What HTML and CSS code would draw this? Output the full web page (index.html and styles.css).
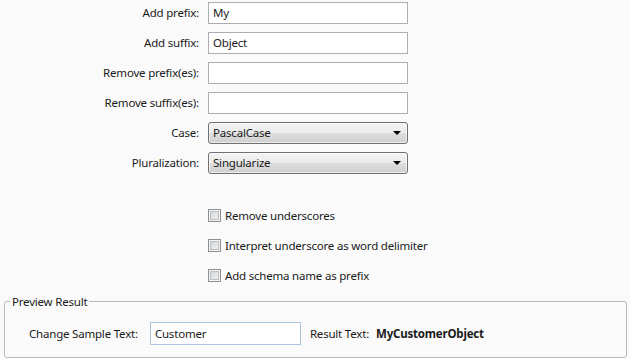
FILE: index.html
```html
<!DOCTYPE html>
<html lang="en">
  <head>
    <meta charset="UTF-8" />
    <title>Naming Options</title>
    <link rel="stylesheet" href="styles.css">
  </head>
  <body>
    <!-- Naming rules -->
    <div class="form-grid">
      <label class="field-label">Add prefix:</label>
      <div class="text-box">My</div>
      <label class="field-label">Add suffix:</label>
      <div class="text-box">Object</div>
      <label class="field-label">Remove prefix(es):</label>
      <div class="text-box"></div>
      <label class="field-label">Remove suffix(es):</label>
      <div class="text-box"></div>
      <label class="field-label">Case:</label>
      <div class="combo-box"><span>PascalCase</span><span class="combo-arrow"></span></div>
      <label class="field-label">Pluralization:</label>
      <div class="combo-box"><span>Singularize</span><span class="combo-arrow"></span></div>
    </div>

    <!-- Options -->
    <div class="check-list">
      <div class="check-row"><span class="check-box"></span>Remove underscores</div>
      <div class="check-row"><span class="check-box"></span>Interpret underscore as word delimiter</div>
      <div class="check-row"><span class="check-box"></span>Add schema name as prefix</div>
    </div>

    <!-- Preview -->
    <fieldset class="preview-group">
      <legend>Preview Result</legend>
      <div class="preview-row">
        <span>Change Sample Text:</span>
        <div class="text-box sample-box">Customer</div>
        <span class="result-label">Result Text:</span>
        <b class="result-value">MyCustomerObject</b>
      </div>
    </fieldset>
  </body>
</html>
```

FILE: styles.css
```css
/* Base */
body { margin: 0; background-color: #fafafa; font-family: "Noto Sans", "Open Sans", sans-serif; font-size: 11.5px; letter-spacing: -0.2px; color: #1a1a1a; width: 630px; height: 359px; overflow: hidden; }

/* Form grid */
.form-grid { display: grid; grid-template-columns: 199px 200px; column-gap: 9px; row-gap: 8px; padding-top: 2px; }
.field-label { text-align: right; line-height: 22px; height: 22px; }
.text-box { box-sizing: border-box; height: 22px; border: 1px solid #acadb3; background-color: #fff; padding: 0 4px; line-height: 20px; }
.combo-box { box-sizing: border-box; height: 22px; border: 1px solid #707070; border-radius: 3px; background: linear-gradient(#f3f3f3, #ebebeb 50%, #dddddd 51%, #cfcfcf); padding: 0 4px; line-height: 20px; display: flex; justify-content: space-between; align-items: center; box-shadow: inset 0 0 0 1px rgba(255, 255, 255, 0.6); }
.combo-arrow { width: 0; height: 0; border-left: 4px solid transparent; border-right: 4px solid transparent; border-top: 4px solid #000; margin-right: 2px; }

/* Checkboxes */
.check-list { display: flex; flex-direction: column; gap: 9px; margin: 31px 0 0 208px; }
.check-row { display: flex; align-items: center; gap: 4px; height: 21px; }
.check-box { box-sizing: border-box; width: 13px; height: 13px; border: 1px solid #8e8f8f; background: linear-gradient(135deg, #cbcfd5, #f6f6f6); box-shadow: inset 0 0 0 1px #f4f4f4, inset 0 0 0 2px #bcbfc4; }

/* Preview group */
.preview-group { margin: 8px 3px 0 4px; padding: 13px 0 12px 24px; border: 1px solid #b7b7b7; border-radius: 3px; box-shadow: inset 1px 1px 0 #fff, 1px 1px 0 #fff; }
.preview-group legend { padding: 0 2px; margin-left: -19px; }
.preview-row { display: flex; align-items: center; }
.sample-box { width: 151px; margin-left: 12px; border-color: #a9c5df; height: 23px; line-height: 21px; }
.result-label { margin-left: 9px; }
.result-value { margin-left: 7px; font-weight: bold; }
```
